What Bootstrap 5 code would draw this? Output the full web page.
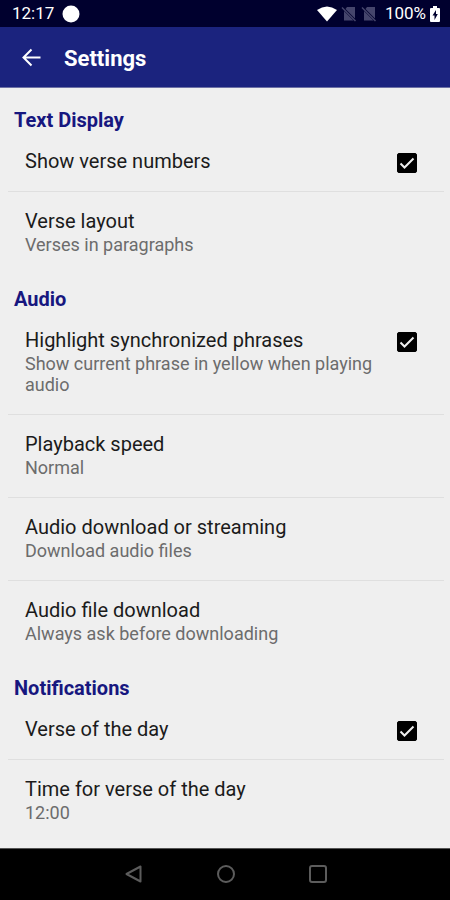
<!DOCTYPE html>
<html lang="en">
<head>
<meta charset="utf-8">
<meta name="viewport" content="width=device-width, initial-scale=1">
<title>Settings</title>
<link href="https://cdn.jsdelivr.net/npm/bootstrap@5.3.0/dist/css/bootstrap.min.css" rel="stylesheet">
<style>
  body { font-family: Roboto, sans-serif; background: #efefef; color: #1b1b1b; }
  svg { display: block; flex: none; }
  .status { height: 27px; background: #00002e; font-size: 17px; line-height: 27px; padding: 0 10px 0 12px; }
  .appbar { height: 61px; background: #1b237e; border-bottom: 1px solid #6d71a5; padding: 2px 20px 0; gap: 20px; }
  .appbar h1 { font-size: 22px; line-height: 28px; padding-top: 2px; }
  .settings { padding: 7px 6px 0 8px; }
  .group-title { font-size: 20px; line-height: 24px; color: #17177f; padding: 13px 6px 0; }
  .setting { padding: 16px 27px 17px 17px; gap: 20px; color: inherit; text-align: left; background: none; }
  .setting + .setting { border-top: 1px solid #dfdfdf; }
  .setting-name { font-size: 20px; line-height: 26px; }
  .setting-note { font-size: 18px; line-height: 21px; color: #6c6c6c; margin-bottom: 2px; }
  .setting .form-check-input { width: 20px; height: 20px; margin: 5px 0 0; border-radius: 2px; flex: none; }
  .setting .form-check-input:checked { background-color: #000; border-color: #000; background-image: url("data:image/svg+xml,%3Csvg xmlns='http://www.w3.org/2000/svg' viewBox='0 0 18 18'%3E%3Cpath d='M2.500 9.500L6.500 13.500L15.500 4.500' fill='none' stroke='%23efefef' stroke-width='2'/%3E%3C/svg%3E"); }
  .softkeys { height: 52px; background: #000; border-top: 1px solid #555; gap: 72px; padding: 0 0 2px 1px; }
</style>
</head>
<body class="d-flex flex-column min-vh-100">
<div class="status d-flex align-items-center text-white">
  <span>12:17</span>
  <svg class="ms-2" width="18" height="18" viewBox="0 0 18 18"><circle cx="9" cy="9" r="8.5" fill="#fff"/></svg>
  <svg class="ms-auto" width="20" height="16" viewBox="0 0 20 16"><path d="M0 4Q10-3 20 4L10 15.500Z" fill="#fff"/></svg>
  <svg class="ms-1" width="16" height="16" viewBox="0 0 16 16"><path d="M6 1H14V12.500L4.500 3ZM3 5L12.500 14.500H3Z" fill="#45456c"/><path d="M1 1.500L14.500 15" stroke="#45456c" stroke-width="1.500"/></svg>
  <svg class="ms-1" width="16" height="16" viewBox="0 0 16 16"><path d="M6 1H14V12.500L4.500 3ZM3 5L12.500 14.500H3Z" fill="#45456c"/><path d="M1 1.500L14.500 15" stroke="#45456c" stroke-width="1.500"/></svg>
  <span class="ms-2">100%</span>
  <svg class="ms-1" width="10" height="16" viewBox="0 0 10 16"><path d="M3 0H7V2H9Q10 2 10 3V15Q10 16 9 16H1Q0 16 0 15V3Q0 2 1 2H3Z" fill="#fff"/><path d="M6 4L2.500 9.500H4.500V14L7.800 8H6Z" fill="#00002e"/></svg>
</div>
<header class="appbar d-flex align-items-center text-white">
  <button type="button" class="btn p-0 border-0 text-white" aria-label="Back">
    <svg width="24" height="24" viewBox="0 0 24 24" fill="none" stroke="currentColor" stroke-width="2"><path d="M20.500 11.500H4M11.500 3.500L3.500 11.500L11.500 19.500"/></svg>
  </button>
  <h1 class="fw-bold mb-0">Settings</h1>
</header>
<main class="settings flex-grow-1">
  <section>
    <h2 class="group-title fw-bold mb-0">Text Display</h2>
    <label class="setting d-flex align-items-start" for="verse-numbers">
      <span class="flex-grow-1"><span class="setting-name d-block">Show verse numbers</span></span>
      <input class="form-check-input" type="checkbox" id="verse-numbers" checked>
    </label>
    <button type="button" class="setting d-block w-100 border-start-0 border-end-0 border-bottom-0">
      <span class="setting-name d-block">Verse layout</span>
      <span class="setting-note d-block">Verses in paragraphs</span>
    </button>
  </section>
  <section>
    <h2 class="group-title fw-bold mb-0">Audio</h2>
    <label class="setting d-flex align-items-start" for="highlight">
      <span class="flex-grow-1">
        <span class="setting-name d-block">Highlight synchronized phrases</span>
        <span class="setting-note d-block">Show current phrase in yellow when playing audio</span>
      </span>
      <input class="form-check-input" type="checkbox" id="highlight" checked>
    </label>
    <button type="button" class="setting d-block w-100 border-start-0 border-end-0 border-bottom-0">
      <span class="setting-name d-block">Playback speed</span>
      <span class="setting-note d-block">Normal</span>
    </button>
    <button type="button" class="setting d-block w-100 border-start-0 border-end-0 border-bottom-0">
      <span class="setting-name d-block">Audio download or streaming</span>
      <span class="setting-note d-block">Download audio files</span>
    </button>
    <button type="button" class="setting d-block w-100 border-start-0 border-end-0 border-bottom-0">
      <span class="setting-name d-block">Audio file download</span>
      <span class="setting-note d-block">Always ask before downloading</span>
    </button>
  </section>
  <section>
    <h2 class="group-title fw-bold mb-0">Notifications</h2>
    <label class="setting d-flex align-items-start" for="daily-verse">
      <span class="flex-grow-1"><span class="setting-name d-block">Verse of the day</span></span>
      <input class="form-check-input" type="checkbox" id="daily-verse" checked>
    </label>
    <button type="button" class="setting d-block w-100 border-start-0 border-end-0 border-bottom-0">
      <span class="setting-name d-block">Time for verse of the day</span>
      <span class="setting-note d-block">12:00</span>
    </button>
  </section>
</main>
<nav class="softkeys d-flex justify-content-center align-items-center" aria-label="System">
  <button type="button" class="btn p-0 border-0" aria-label="Back"><svg width="20" height="20" viewBox="0 0 20 20" fill="none" stroke="#5c5c5c" stroke-width="2" stroke-linejoin="round"><path d="M16.500 2.500V17.500L2.500 10Z"/></svg></button>
  <button type="button" class="btn p-0 border-0" aria-label="Home"><svg width="20" height="20" viewBox="0 0 20 20" fill="none" stroke="#5c5c5c" stroke-width="2"><circle cx="10" cy="10" r="8"/></svg></button>
  <button type="button" class="btn p-0 border-0" aria-label="Recent apps"><svg width="20" height="20" viewBox="0 0 20 20" fill="none" stroke="#5c5c5c" stroke-width="2"><rect x="2" y="2" width="16" height="16" rx="2"/></svg></button>
</nav>
<script src="https://cdn.jsdelivr.net/npm/bootstrap@5.3.0/dist/js/bootstrap.bundle.min.js"></script>
</body>
</html>
